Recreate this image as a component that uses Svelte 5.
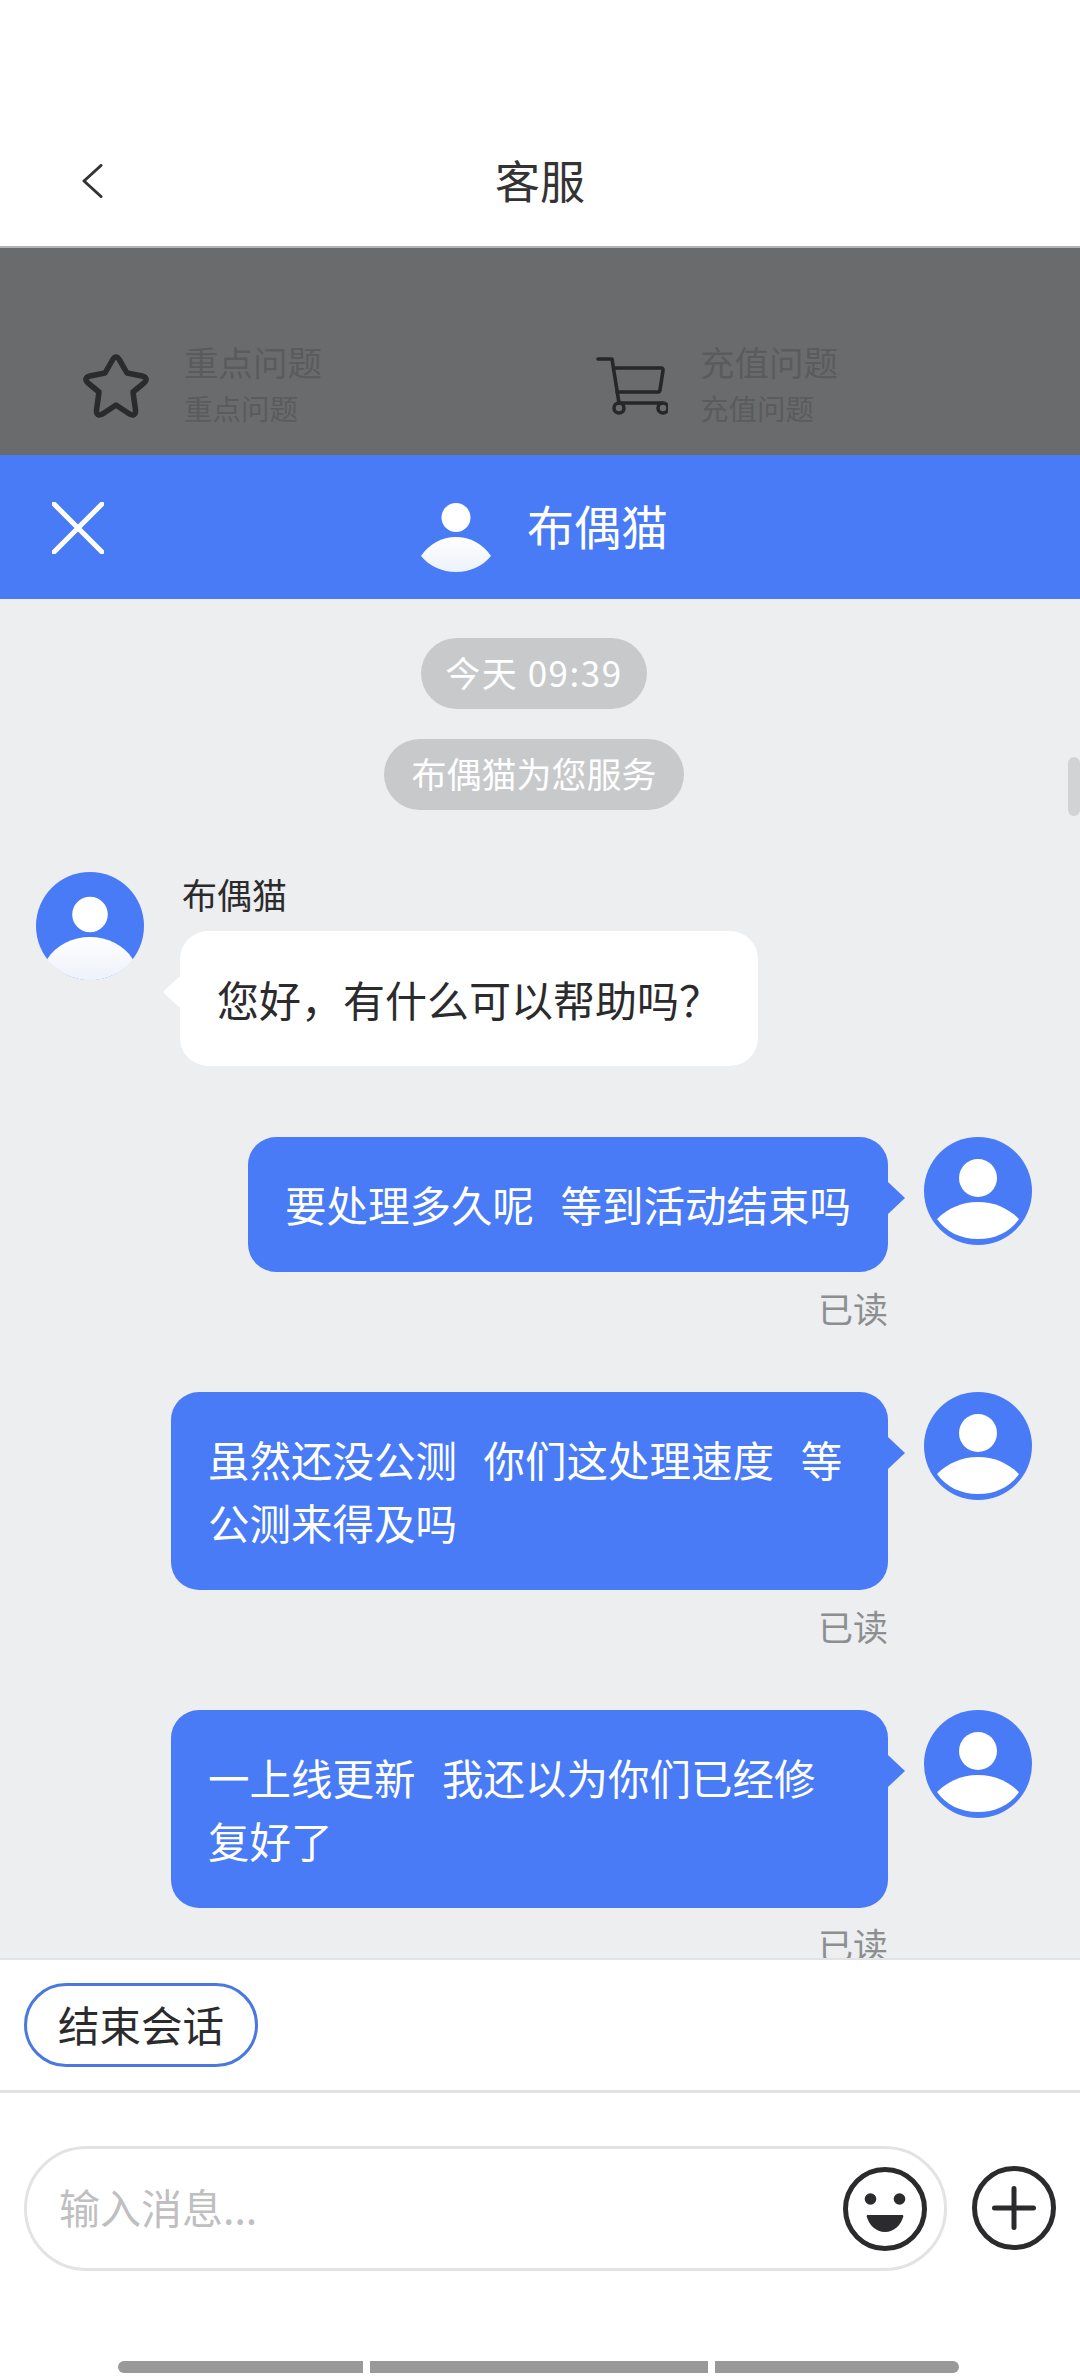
<script lang="ts">
  const quick = [
    { title: "重点问题", sub: "重点问题", icon: "star" },
    { title: "充值问题", sub: "充值问题", icon: "cart" }
  ];

  // Sent messages keep the double spaces from the original chat
  const sent = [
    "要处理多久呢  等到活动结束吗",
    "虽然还没公测  你们这处理速度  等公测来得及吗",
    "一上线更新  我还以为你们已经修复好了"
  ];
</script>

{#snippet avatar(cls)}
  <svg class="avatar" viewBox="0 0 108 108">
    <circle cx="54" cy="54" r="54" fill="#487bf5" />
    {#if cls === "mine"}
      <circle cx="54" cy="41" r="19" fill="#fff" />
      <path d="M13 82 C24 71 38 65 54 65 C70 65 84 71 95 82 C86 95 71 102 54 102 C37 102 22 95 13 82Z" fill="#fff" />
    {:else}
      <circle cx="54" cy="42.500" r="17.800" fill="#fff" />
      <path d="M11 87.500 C20 73 37 65 54 65 C71 65 88 73 97 87.500 A55 55 0 0 1 11 87.500Z" fill="url(#body-fade)" />
    {/if}
  </svg>
{/snippet}

<svg class="defs" width="0" height="0">
  <defs>
    <linearGradient id="body-fade" x1="0" y1="0" x2="0" y2="1">
      <stop offset="0" stop-color="#fff" />
      <stop offset="1" stop-color="#edf1fa" />
    </linearGradient>
  </defs>
</svg>

<div class="page">
  <header class="topbar">
    <svg class="back" viewBox="0 0 22 34"><path d="M20 1.500 3 17l17 15.500" /></svg>
    <h1>客服</h1>
  </header>

  <section class="dimmed">
    {#each quick as item}
      <div class="quick">
        {#if item.icon === "star"}
          <svg class="star" viewBox="0 0 68 66">
            <path d="M30.500 7 Q34 1 37.500 7 L45 20 L60 23 Q67 25 62 30 L51 39 L53.500 57 Q54 64 47.500 61 L34 52 L20.500 61 Q14 64 14.500 57 L17 39 L6 30 Q1 25 8 23 L23 20Z" />
          </svg>
        {:else}
          <svg class="cart" viewBox="0 0 72 60">
            <path d="M2 4h14l7 44h43" />
            <path d="M18 13h47c1.500 0 2.300 1 2 2.500L64 35c-.3 1.400-1 2-2.400 2H21" />
            <circle cx="23" cy="53" r="5" />
            <circle cx="67" cy="53" r="5" />
          </svg>
        {/if}
        <div class="quick-text">
          <span class="quick-title">{item.title}</span>
          <span class="quick-sub">{item.sub}</span>
        </div>
      </div>
    {/each}
  </section>

  <div class="chat-head">
    <svg class="close" viewBox="0 0 52 52"><path d="M2 2l48 48M50 2 2 50" /></svg>
    <div class="agent">
      <svg class="agent-icon" viewBox="0 0 70 70">
        <circle cx="35" cy="14.500" r="14.500" fill="#fff" />
        <path d="M0 53 C8 41 21 34 35 34 C49 34 62 41 70 53 C62 63 49 69 35 69 C21 69 8 63 0 53Z" fill="url(#body-fade)" />
      </svg>
      <span>布偶猫</span>
    </div>
  </div>

  <main class="chat">
    <div class="pill-wrap">
      <span class="pill time">今天 09:39</span>
      <span class="pill">布偶猫为您服务</span>
    </div>

    <div class="row left">
      {@render avatar("agent-av")}
      <div class="left-body">
        <div class="name">布偶猫</div>
        <div class="bubble white">您好，有什么可以帮助吗？</div>
      </div>
    </div>

    {#each sent as text}
      <div class="row right">
        <div class="right-body">
          <div class="bubble blue">{text}</div>
          <div class="read">已读</div>
        </div>
        {@render avatar("mine")}
      </div>
    {/each}

    <div class="scroll-thumb"></div>
  </main>

  <div class="actions">
    <button class="end">结束会话</button>
  </div>

  <footer class="composer">
    <div class="input">
      <span class="placeholder">输入消息...</span>
      <svg class="round" viewBox="0 0 84 84">
        <circle cx="42" cy="42" r="39.500" class="ring" />
        <circle cx="27.500" cy="32" r="5.800" fill="#2b2b2d" />
        <circle cx="56.500" cy="32" r="5.800" fill="#2b2b2d" />
        <path d="M25 48h34c1 0 1.500.6 1.300 1.500C58 58 51 65 42 65s-16-7-18.300-15.500C23.500 48.600 24 48 25 48Z" fill="#2b2b2d" />
      </svg>
    </div>
    <svg class="round" viewBox="0 0 84 84">
      <circle cx="42" cy="42" r="39.500" class="ring" />
      <path d="M42 22.500v39M22.500 42h39" class="plus" />
    </svg>
  </footer>

  <div class="home-bar">
    <span class="seg first"></span>
    <span class="seg mid"></span>
    <span class="seg last"></span>
  </div>
</div>

<style>
  :global(body) {
    margin: 0;
    background: #fff;
  }

  .defs {
    position: absolute;
  }

  .page {
    width: 1080px;
    height: 2376px;
    display: flex;
    flex-direction: column;
    overflow: hidden;
    font-family: "Noto Sans CJK SC", "Noto Sans", sans-serif;
    background: #fff;
    color: #2b2b2d;
  }

  .topbar {
    height: 248px;
    flex: none;
    box-sizing: border-box;
    padding: 146px 80px 0;
    position: relative;
    border-bottom: 2px solid #b4b4b4;
    text-align: center;
  }

  .topbar h1 {
    margin: 0;
    font-size: 45px;
    line-height: 68px;
    font-weight: 400;
    color: #333;
  }

  .back {
    position: absolute;
    left: 81px;
    top: 164px;
    width: 22px;
    height: 34px;
    fill: none;
    stroke: #333;
    stroke-width: 3;
    stroke-linecap: round;
    stroke-linejoin: round;
  }

  .dimmed {
    height: 207px;
    flex: none;
    background: #6a6b6d;
    display: flex;
    box-sizing: border-box;
    padding: 101px 0 0 82px;
  }

  .quick {
    width: 514px;
    flex: none;
    display: flex;
    align-items: flex-start;
    gap: 34px;
    color: #5a5b5e;
  }

  .star {
    width: 68px;
    height: 66px;
    margin-top: 4px;
    fill: none;
    stroke: #2a2b2d;
    stroke-width: 5.500;
    stroke-linejoin: round;
  }

  .cart {
    width: 72px;
    height: 60px;
    margin-top: 6px;
    margin-right: -2px;
    fill: none;
    stroke: #26272a;
    stroke-width: 3.600;
    stroke-linecap: round;
    stroke-linejoin: round;
  }

  .quick-text {
    display: flex;
    flex-direction: column;
    margin-top: -11px;
  }

  .quick-title {
    font-size: 34.500px;
    line-height: 46px;
  }

  .quick-sub {
    font-size: 28.500px;
    line-height: 42px;
    margin-top: 3px;
  }

  .chat-head {
    height: 144px;
    flex: none;
    background: #487bf5;
    position: relative;
    display: flex;
    justify-content: center;
    color: #fff;
  }

  .close {
    position: absolute;
    left: 52px;
    top: 47px;
    width: 52px;
    height: 52px;
    fill: none;
    stroke: #fff;
    stroke-width: 5;
    stroke-linecap: round;
  }

  .agent {
    display: flex;
    align-items: flex-start;
    gap: 36px;
    margin-left: 9px;
    font-size: 47px;
  }

  .agent-icon {
    width: 70px;
    height: 70px;
    margin-top: 48px;
  }

  .agent span {
    line-height: 70px;
    margin-top: 35px;
  }

  .chat {
    flex: 1;
    min-height: 0;
    overflow: hidden;
    position: relative;
    background: #eceef0;
    border-bottom: 2px solid #e3e3e5;
    padding: 39px 48px 0 36px;
  }

  .pill-wrap {
    display: flex;
    flex-direction: column;
    align-items: center;
    gap: 30px;
    margin: 0 -48px 62px -36px;
    transform: translateX(-6px);
  }

  .pill {
    height: 71px;
    line-height: 68px;
    padding: 0 27.500px;
    box-sizing: border-box;
    border-radius: 36px;
    background: #c8c9cb;
    color: #fff;
    font-size: 35px;
  }

  .pill.time {
    letter-spacing: 1.500px;
    padding: 0 24px;
  }

  .row {
    display: flex;
    gap: 36px;
  }

  .row.left {
    margin-bottom: 71px;
  }

  .row.right {
    justify-content: flex-end;
    margin-bottom: 61px;
  }

  .avatar {
    width: 108px;
    height: 108px;
    flex: none;
  }

  .name {
    font-size: 35px;
    line-height: 47px;
    margin: -2px 0 14px 2px;
  }

  .bubble {
    position: relative;
    box-sizing: border-box;
    max-width: 717px;
    padding: 36px 37px;
    border-radius: 28px;
    font-size: 41.500px;
    line-height: 63px;
    white-space: pre-wrap;
    word-spacing: 4px;
  }

  .bubble::after {
    content: "";
    position: absolute;
    width: 0;
    height: 0;
    top: 45px;
    border-top: 16px solid transparent;
    border-bottom: 16px solid transparent;
  }

  .bubble.white {
    background: #fff;
    min-width: 576px;
    font-size: 42px;
  }

  .bubble.white::after {
    left: -17px;
    border-right: 17px solid #fff;
  }

  .bubble.blue {
    background: #487bf5;
    color: #fff;
  }

  .bubble.blue::after {
    right: -17px;
    border-left: 17px solid #487bf5;
  }

  .right-body {
    display: flex;
    flex-direction: column;
    align-items: flex-end;
  }

  .read {
    font-size: 35px;
    line-height: 47px;
    margin-top: 12px;
    color: #8d8e90;
  }

  .scroll-thumb {
    position: absolute;
    right: 0;
    top: 158px;
    width: 12px;
    height: 59px;
    border-radius: 6px;
    background: #d2d3d5;
  }

  .actions {
    height: 133px;
    flex: none;
    box-sizing: border-box;
    border-bottom: 3px solid #e3e3e5;
    padding: 23px 24px 0;
  }

  .end {
    display: block;
    width: 234px;
    height: 84px;
    padding: 0 0 3px;
    border: 3px solid #4a78e0;
    border-radius: 42px;
    background: #fff;
    font: inherit;
    font-size: 41.500px;
    color: #2b2b2d;
  }

  .composer {
    height: 268px;
    flex: none;
    box-sizing: border-box;
    padding: 53px 24px 0;
    display: flex;
    align-items: flex-start;
    gap: 25px;
  }

  .input {
    width: 923px;
    height: 125px;
    flex: none;
    box-sizing: border-box;
    border: 3px solid #e3e3e5;
    border-radius: 63px;
    padding: 0 17px 0 32px;
    display: flex;
    align-items: center;
    justify-content: space-between;
  }

  .placeholder {
    font-size: 41px;
    color: #bfbfc1;
    margin-top: -5px;
  }

  .round {
    width: 84px;
    height: 84px;
    flex: none;
  }

  .composer > .round {
    margin-top: 20px;
  }

  .ring {
    fill: none;
    stroke: #2b2b2d;
    stroke-width: 5;
  }

  .plus {
    fill: none;
    stroke: #2b2b2d;
    stroke-width: 5;
    stroke-linecap: round;
  }

  .home-bar {
    height: 15px;
    flex: none;
    display: flex;
    gap: 7px;
    padding-left: 118px;
    align-items: flex-start;
  }

  .seg {
    height: 12px;
    background: #999;
  }

  .seg.first {
    width: 245px;
    border-radius: 6px 0 0 6px;
  }

  .seg.mid {
    width: 338px;
  }

  .seg.last {
    width: 244px;
    border-radius: 0 6px 6px 0;
  }
</style>
